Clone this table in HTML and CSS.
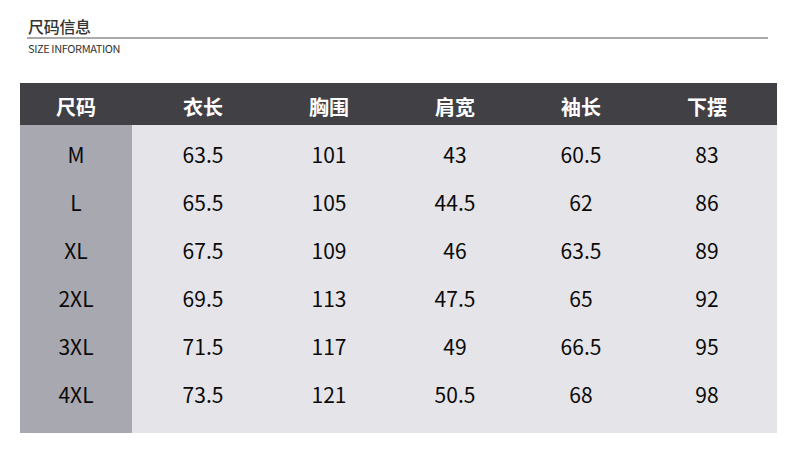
FILE: index.html
```html
<!DOCTYPE html>
<html lang="zh-CN">
<head>
<meta charset="utf-8">
<link rel="stylesheet" href="styles.css">
</head>
<body>
<div class="page">
  <header class="title">
    <div class="title-cn">尺码信息</div>
    <div class="title-rule"></div>
    <div class="title-en">SIZE INFORMATION</div>
  </header>
  <div class="table">
    <div class="row head">
      <div class="cell first">尺码</div>
      <div class="cell">衣长</div>
      <div class="cell">胸围</div>
      <div class="cell">肩宽</div>
      <div class="cell">袖长</div>
      <div class="cell">下摆</div>
    </div>
    <div class="body">
      <div class="row"><div class="cell first">M</div><div class="cell">63.5</div><div class="cell">101</div><div class="cell">43</div><div class="cell">60.5</div><div class="cell">83</div></div>
      <div class="row"><div class="cell first">L</div><div class="cell">65.5</div><div class="cell">105</div><div class="cell">44.5</div><div class="cell">62</div><div class="cell">86</div></div>
      <div class="row"><div class="cell first">XL</div><div class="cell">67.5</div><div class="cell">109</div><div class="cell">46</div><div class="cell">63.5</div><div class="cell">89</div></div>
      <div class="row"><div class="cell first">2XL</div><div class="cell">69.5</div><div class="cell">113</div><div class="cell">47.5</div><div class="cell">65</div><div class="cell">92</div></div>
      <div class="row"><div class="cell first">3XL</div><div class="cell">71.5</div><div class="cell">117</div><div class="cell">49</div><div class="cell">66.5</div><div class="cell">95</div></div>
      <div class="row"><div class="cell first">4XL</div><div class="cell">73.5</div><div class="cell">121</div><div class="cell">50.5</div><div class="cell">68</div><div class="cell">98</div></div>
    </div>
  </div>
</div>
</body>
</html>
```
FILE: styles.css
```css
* { box-sizing: border-box; margin: 0; padding: 0; }
html, body { background: #ffffff; }
body {
  font-family: "Noto Sans CJK SC", "Noto Sans", sans-serif;
  width: 790px;
  height: 449px;
  overflow: hidden;
}
.page {
  padding-top: 17px;
}
.title {
  padding-left: 27px;
  width: 768px;
}
.title-cn {
  font-size: 16px;
  line-height: 19px;
  color: #333333;
  font-weight: 500;
  padding-left: 1px;
  letter-spacing: -0.3px;
}
.title-rule {
  height: 2px;
  background: #aaaaaa;
  margin-top: 1px;
}
.title-en {
  font-size: 11px;
  line-height: 12px;
  color: #333333;
  margin-top: 3px;
  padding-left: 1px;
  letter-spacing: -0.4px;
}
.table {
  margin-top: 29px;
  margin-left: 20px;
  width: 757px;
}
.row {
  display: flex;
  align-items: stretch;
}
.cell {
  width: 126px;
  display: flex;
  align-items: center;
  justify-content: center;
}
.cell.first {
  width: 112px;
  margin-right: 8px;
}
.head {
  background: #414045;
  height: 42px;
  color: #ffffff;
  font-size: 20px;
  font-weight: 700;
}
.head .cell { padding-top: 4px; }
.body {
  background: #e5e4e9;
  background-image: linear-gradient(to right, #a8a8b0 0, #a8a8b0 112px, transparent 112px);
  padding-top: 4px;
  padding-bottom: 16px;
}
.body .row {
  height: 48px;
  font-size: 21px;
  color: #0a0a0a;
}
.body .cell { padding-top: 1px; }
```
